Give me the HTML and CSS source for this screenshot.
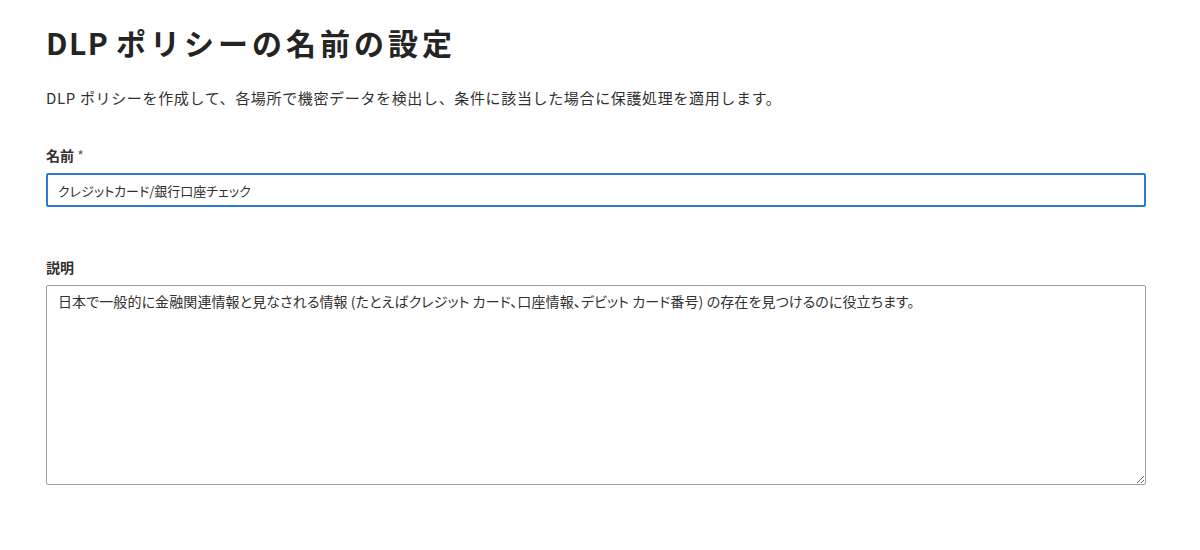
FILE: index.html
```html
<!DOCTYPE html>
<html lang="ja">
<head>
<meta charset="utf-8">
<title>DLP ポリシーの名前の設定</title>
<link rel="stylesheet" href="styles.css">
</head>
<body>
<main class="page">
  <h1 class="title"><span class="title-latin">DLP</span> <span class="title-cjk">ポリシーの名前の設定</span></h1>
  <p class="intro">DLP ポリシーを作成して、各場所で機密データを検出し、条件に該当した場合に保護処理を適用します。</p>
  <div class="field">
    <label class="label" for="name">名前 <span class="req">*</span></label>
    <input id="name" class="input" type="text" value="クレジットカード/銀行口座チェック">
  </div>
  <div class="field field-desc">
    <label class="label" for="desc">説明</label>
    <textarea id="desc" class="textarea">日本で一般的に金融関連情報と見なされる情報 (たとえばクレジット カード、口座情報、デビット カード番号) の存在を見つけるのに役立ちます。</textarea>
  </div>
</main>
</body>
</html>
```
FILE: styles.css
```css
* { box-sizing: border-box; }
html, body { margin: 0; padding: 0; background: #ffffff; }
body {
  font-family: "Noto Sans CJK JP", "Noto Sans", sans-serif;
  color: #323130;
}
.page {
  padding: 22px 54px 0 46px;
  display: flex;
  flex-direction: column;
}
.title {
  margin: 0;
  font-size: 30px;
  line-height: 40px;
  font-weight: 700;
  color: #252423;
}
.title-latin { letter-spacing: 1.5px; }
.title-cjk { letter-spacing: 4px; }
.intro {
  margin: 25px 0 0 0;
  font-size: 15px;
  line-height: 22px;
  letter-spacing: 0.65px;
  color: #323130;
}
.field {
  display: flex;
  flex-direction: column;
  margin-top: 36px;
}
.field-desc { margin-top: 50px; }
.label {
  font-size: 14px;
  font-weight: 700;
  line-height: 20px;
  margin-bottom: 8px;
  color: #323130;
}
.req { font-weight: 400; color: #605e5c; }
.input {
  width: 100%;
  height: 34px;
  border: 2px solid #2b7bd6;
  border-radius: 2px;
  padding: 0 10px;
  font-family: inherit;
  font-size: 13px;
  font-feature-settings: "palt";
  color: #323130;
  outline: none;
  background: #fff;
}
.textarea {
  width: 100%;
  height: 200px;
  border: 1px solid #a19f9d;
  border-radius: 2px;
  padding: 5px 11px;
  font-family: inherit;
  font-size: 14px;
  line-height: 20px;
  letter-spacing: 0.1px;
  font-feature-settings: "palt";
  color: #323130;
  resize: vertical;
  background: #fff;
}
```
